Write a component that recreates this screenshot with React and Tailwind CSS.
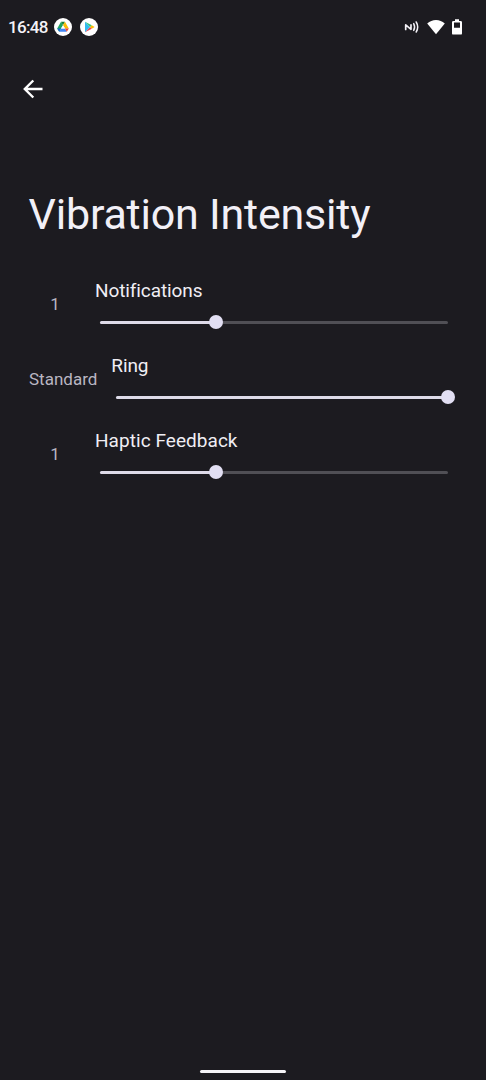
import React from 'react'

const sliders = [
  { id: 'notifications', title: 'Notifications', label: '1', value: 1, max: 3, titleClass: 'tracking-[-0.1px]' },
  { id: 'ring', title: 'Ring', label: 'Standard', value: 3, max: 3, titleClass: 'tracking-[-0.1px]' },
  { id: 'haptic', title: 'Haptic Feedback', label: '1', value: 1, max: 3, titleClass: 'tracking-[0.05px]' },
]

function DriveIcon() {
  return (
    <svg width="18" height="18" viewBox="0 0 18 18">
      <circle cx="9" cy="9" r="9" fill="#fff" />
      <path d="M7 3.8 L9 7.3 L5.2 13.8 L3.2 10.6 Z" fill="#1fa463" />
      <path d="M7 3.8 H11 L9 7.3 Z" fill="#188038" />
      <path d="M11 3.8 L14.8 10.6 H11 L9 7.3 Z" fill="#fbbc04" />
      <path d="M3.2 10.6 H7 L5.2 13.8 Z" fill="#1967d2" />
      <path d="M7 10.6 H11 L12.8 13.8 H5.2 Z" fill="#4285f4" />
      <path d="M11 10.6 H14.8 L12.8 13.8 Z" fill="#ea4335" />
      <path d="M9 7.3 L11 10.6 H7 Z" fill="#fff" />
    </svg>
  )
}

function PlayIcon() {
  return (
    <svg width="18" height="18" viewBox="0 0 18 18">
      <circle cx="9" cy="9" r="9" fill="#fff" />
      <path d="M5 3.7 V14.3 L10.2 9 Z" fill="#32bbf0" />
      <path d="M5 3.7 L10.2 9 L11.8 7.3 Z" fill="#34c778" />
      <path d="M5 14.3 L10.2 9 L11.8 10.7 Z" fill="#ee4050" />
      <path d="M11.8 7.3 L14.6 9 L11.8 10.7 L10.2 9 Z" fill="#fbbc04" />
    </svg>
  )
}

function NfcIcon() {
  return (
    <svg width="16" height="14" viewBox="0 0 16 14" fill="none" stroke="#f3f1f6" strokeWidth="1.5" strokeLinecap="round" strokeLinejoin="round">
      <path strokeWidth="1.7" d="M1.7 9.4 V4.9 L7 9.3 V4.9" />
      <path d="M9.7 3.6 Q11.5 7 9.7 10.4" />
      <path d="M12.2 2 Q15.2 7 12.2 12" />
    </svg>
  )
}

function StatusBar() {
  return (
    <div className="flex h-[54px] items-center pl-[8px] pr-[24px]">
      <span className="w-[46px] whitespace-nowrap text-[17px] font-medium leading-[20px] tracking-[-0.7px] text-[#f5f3f8]">16:48</span>
      <div className="flex items-center gap-[8px]">
        <DriveIcon />
        <PlayIcon />
      </div>
      <div className="ml-auto flex items-center">
        <NfcIcon />
        <svg className="ml-[7px]" width="18" height="16" viewBox="0 0 18 16" fill="#fff">
          <path d="M0.2 4.6 Q4 1 9 1 T17.8 4.6 L9 15.2 Z" />
        </svg>
        <svg className="ml-[7px]" width="10" height="16" viewBox="0 0 10 16">
          <path fill="#fff" fillRule="evenodd" d="M3 0.3 H7 V2 H8.6 Q10 2 10 3.2 V14.4 Q10 15.6 8.6 15.6 H1.4 Q0 15.6 0 14.4 V3.2 Q0 2 1.4 2 H3 Z M2 3.6 V8.8 H8 V3.6 Z" />
        </svg>
      </div>
    </div>
  )
}

function SliderRow({ title, label, value, max, titleClass }) {
  const percent = (value / max) * 100

  return (
    <div className="flex h-[75px] gap-[14px]">
      <div className="flex min-w-[52px] shrink-0 items-center justify-center pb-[23px] text-[17px] text-[#b9b6c2]">
        <span>{label}</span>
      </div>
      <div className="flex-1">
        <div className={`h-[24px] whitespace-nowrap text-[19px] leading-[24px] text-[#f0eef4] ${titleClass}`}>{title}</div>
        <div className="mx-[5px] mt-[12px] flex h-[15px] items-center">
          <div className="relative h-[3px] w-full rounded-full bg-[#504f55]">
            <div className="h-full rounded-full bg-[#dedbe9]" style={{ width: `${percent}%` }} />
            <div
              className="absolute top-[-6px] h-[14px] w-[14px] -translate-x-1/2 rounded-full bg-[#e2dff3]"
              style={{ left: `${percent}%` }}
            />
          </div>
        </div>
      </div>
    </div>
  )
}

export default function App() {
  return (
    <div className="flex h-[1080px] w-[486px] flex-col overflow-hidden bg-[#1c1b20] font-['Roboto',sans-serif]">
      <StatusBar />
      <div className="flex h-[70px] items-center pl-[23px]">
        <button aria-label="Back">
          <svg width="20" height="20" viewBox="0 0 20 20" fill="none" stroke="#fff" strokeWidth="2.4">
            <path d="M19.5 10 H2.2 M10.3 1.5 L1.8 10 L10.3 18.5" />
          </svg>
        </button>
      </div>
      <h1 className="mt-[64px] whitespace-nowrap pl-[28.5px] text-[43px] leading-[52px] tracking-[-0.2px] text-[#f2f0f7]">Vibration Intensity</h1>
      <div className="mt-[39px] pl-[29px] pr-[33px]">
        {sliders.map(({ id, ...slider }) => (
          <SliderRow key={id} {...slider} />
        ))}
      </div>
      <div className="mx-auto mb-[7px] mt-auto h-[3px] w-[86px] rounded-full bg-[#f5f4f7]" />
    </div>
  )
}
